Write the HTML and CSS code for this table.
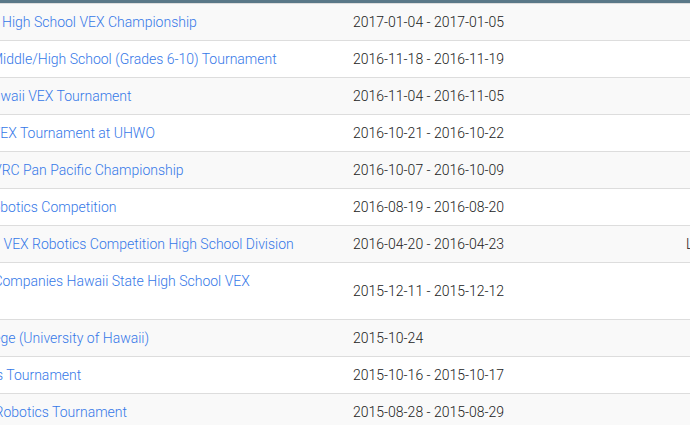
FILE: index.html
```html
<!DOCTYPE html>
<html>
<head>
<meta charset="utf-8">
<link rel="stylesheet" href="styles.css">
</head>
<body>
<div class="events">
  <div class="events-head"></div>
  <table class="events-table">
    <colgroup>
      <col class="col-name">
      <col class="col-date">
      <col class="col-loc">
    </colgroup>
    <tbody>
      <tr><td class="name o-r1"><a href="#">High School VEX Championship</a></td><td class="date">2017-01-04 - 2017-01-05</td><td class="loc"></td></tr>
      <tr><td class="name o-r2"><a href="#">Middle/High School (Grades 6-10) Tournament</a></td><td class="date">2016-11-18 - 2016-11-19</td><td class="loc"></td></tr>
      <tr><td class="name o-r3"><a href="#">Hawaii VEX Tournament</a></td><td class="date">2016-11-04 - 2016-11-05</td><td class="loc"></td></tr>
      <tr><td class="name o-r4"><a href="#">VEX Tournament at UHWO</a></td><td class="date">2016-10-21 - 2016-10-22</td><td class="loc"></td></tr>
      <tr><td class="name o-r5"><a href="#">VRC Pan Pacific Championship</a></td><td class="date">2016-10-07 - 2016-10-09</td><td class="loc"></td></tr>
      <tr><td class="name o-r6"><a href="#">Robotics Competition</a></td><td class="date">2016-08-19 - 2016-08-20</td><td class="loc"></td></tr>
      <tr><td class="name o-r7"><a href="#">VEX Robotics Competition High School Division</a></td><td class="date">2016-04-20 - 2016-04-23</td><td class="loc">Louisville, KY</td></tr>
      <tr><td class="name o-r8"><a href="#">Companies Hawaii State High School VEX<br>Championship</a></td><td class="date">2015-12-11 - 2015-12-12</td><td class="loc"></td></tr>
      <tr><td class="name o-r9"><a href="#">College (University of Hawaii)</a></td><td class="date">2015-10-24</td><td class="loc"></td></tr>
      <tr><td class="name o-r10"><a href="#">s Tournament</a></td><td class="date">2015-10-16 - 2015-10-17</td><td class="loc"></td></tr>
      <tr><td class="name o-r11"><a href="#">Robotics Tournament</a></td><td class="date">2015-08-28 - 2015-08-29</td><td class="loc"></td></tr>
    </tbody>
  </table>
</div>
</body>
</html>
```

FILE: styles.css
```css
html, body {
  margin: 0;
  padding: 0;
  background: #ffffff;
  overflow: hidden;
}

body {
  font-family: Roboto, "Liberation Sans", sans-serif;
  font-size: 14px;
  font-weight: 300;
  line-height: 20px;
  color: #222222;
}

.events {
  width: 690px;
  overflow: hidden;
}

.events-head {
  height: 3px;
  background: #5a7888;
}

.events-table {
  border-collapse: collapse;
  table-layout: fixed;
  width: 1200px;
  margin-left: -300px;
}

.col-name { width: 645px; }
.col-date { width: 333px; }
.col-loc { width: 222px; }

.events-table td {
  border-top: 1px solid #dddddd;
  padding: 8px;
  vertical-align: middle;
  white-space: nowrap;
}

.events-table tr:nth-child(odd) td {
  background: #f9f9f9;
}

.events-table td.name {
  padding-left: 0;
  vertical-align: top;
}

.events-table a {
  color: #3578e8;
  text-decoration: none;
}

.o-r1 { text-indent: 302px; }
.o-r2 { text-indent: 291px; }
.o-r3 { text-indent: 283px; }
.o-r4 { text-indent: 291.6px; }
.o-r5 { text-indent: 293px; }
.o-r6 { text-indent: 283.6px; }
.o-r7 { text-indent: 303.5px; }
.o-r8 { text-indent: 293.4px; }
.o-r9 { text-indent: 270px; }
.o-r10 { text-indent: 296px; }
.o-r11 { text-indent: 294.6px; }
```
